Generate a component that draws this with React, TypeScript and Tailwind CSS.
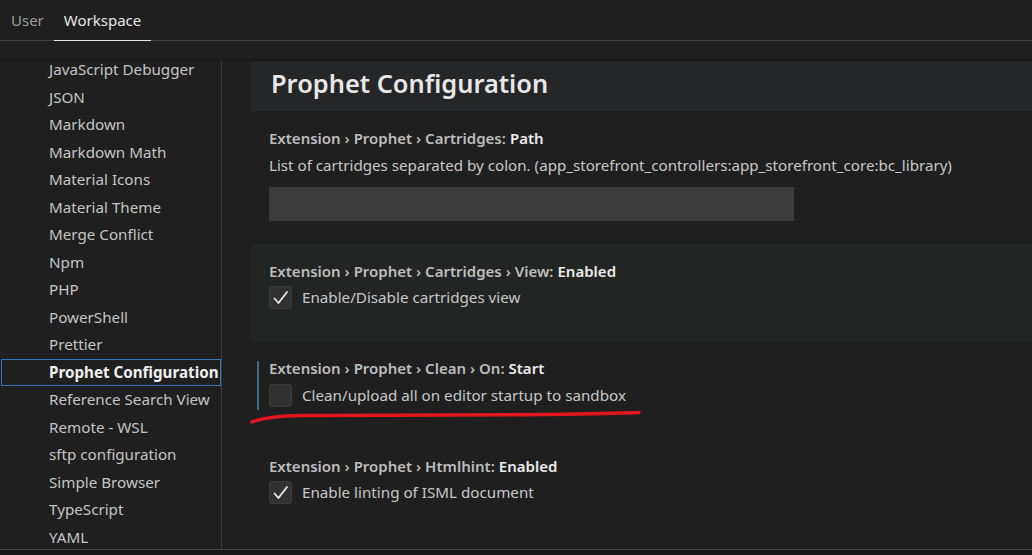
import React from 'react';

const groups = [
  'JavaScript Debugger',
  'JSON',
  'Markdown',
  'Markdown Math',
  'Material Icons',
  'Material Theme',
  'Merge Conflict',
  'Npm',
  'PHP',
  'PowerShell',
  'Prettier',
  'Prophet Configuration',
  'Reference Search View',
  'Remote - WSL',
  'sftp configuration',
  'Simple Browser',
  'TypeScript',
  'YAML',
];

const Checkbox = ({ checked }: { checked: boolean }) => (
  <div className="w-[23px] h-[23px] rounded-[3px] bg-[#313131] border border-[#3c3c3c] flex items-center justify-center shrink-0">
    {checked && (
      <svg width="21" height="21" viewBox="0 0 21 21" fill="none">
        <path d="M4.5 11.5 L8.5 16 L17 5" stroke="#e8e8e8" strokeWidth="1.8" strokeLinecap="round" strokeLinejoin="round" />
      </svg>
    )}
  </div>
);

const SettingTitle = ({ path, name }: { path: string; name: string }) => (
  <div className="h-[18px] flex items-center text-[15px] font-semibold text-[#bdbdbd] whitespace-nowrap">
    {path}
    <span className="text-[#ececec] ml-[4px]">{name}</span>
  </div>
);

const BoolSetting = ({
  path,
  name,
  label,
  checked,
  hover,
  focused,
}: {
  path: string;
  name: string;
  label: string;
  checked: boolean;
  hover?: boolean;
  focused?: boolean;
}) => (
  <div className={`relative h-[97.5px] pl-[18px] pt-[18px] ${hover ? 'bg-[#232525]' : ''}`}>
    {focused && <div className="absolute left-[6px] top-[19px] w-[2px] h-[49px] bg-[#3b6a8a]" />}
    <SettingTitle path={path} name={name} />
    <div className="flex items-center mt-[6px]">
      <Checkbox checked={checked} />
      <span className="ml-[10px] text-[15.2px] text-[#c8c8c8]">{label}</span>
    </div>
  </div>
);

export default function App() {
  return (
    <div className="w-[1032px] h-[555px] bg-[#1f1f1f] flex flex-col overflow-hidden font-['Noto_Sans',sans-serif] relative">
      {/* tabs */}
      <div className="h-[41px] shrink-0 flex border-b border-[#454545] pl-[1px]">
        <div className="px-[10px] flex items-center text-[15px] text-[#9d9d9d]">User</div>
        <div className="px-[10px] flex items-center text-[15px] text-[#e7e7e7] border-b border-[#e7e7e7] mb-[-1px]">Workspace</div>
      </div>
      <div className="h-[18px] shrink-0" />

      <div className="flex-1 flex min-h-0 border-b border-[#454545] relative">
        <div className="absolute left-0 right-0 top-0 h-[3px] bg-gradient-to-b from-[#161616] to-transparent z-10" />
        {/* sidebar */}
        <div className="w-[222px] shrink-0 border-r border-[#3f3f3f] overflow-hidden">
          <div className="mt-[-3px]">
            {groups.map((g) =>
              g === 'Prophet Configuration' ? (
                <div
                  key={g}
                  className="h-[27.5px] ml-[1px] pl-[47px] flex items-center border border-[#3a72bd] text-[15.2px] font-bold text-[#f0f0f0] whitespace-nowrap overflow-hidden"
                >
                  {g}
                </div>
              ) : (
                <div key={g} className="h-[27.5px] pl-[49px] flex items-center text-[15.2px] text-[#c5c5c5] whitespace-nowrap">
                  {g}
                </div>
              )
            )}
          </div>
        </div>

        {/* main */}
        <div className="flex-1 pl-[29px] overflow-hidden">
          <div className="h-[49px] mt-[3px] bg-[#252628] pl-[20px] pb-[6px] flex items-center text-[25.4px] font-semibold text-[#e7e7e7]">
            Prophet Configuration
          </div>

          <div className="h-[133px] pl-[18px] pt-[18px]">
            <SettingTitle path="Extension › Prophet › Cartridges:" name="Path" />
            <div className="h-[22px] mt-[7px] flex items-center text-[15.15px] text-[#c8c8c8] whitespace-nowrap">
              List of cartridges separated by colon. (app_storefront_controllers:app_storefront_core:bc_library)
            </div>
            <div className="w-[525px] h-[34px] mt-[11px] bg-[#3c3c3c]" />
          </div>

          <BoolSetting
            path="Extension › Prophet › Cartridges › View:"
            name="Enabled"
            label="Enable/Disable cartridges view"
            checked
            hover
          />
          <BoolSetting
            path="Extension › Prophet › Clean › On:"
            name="Start"
            label="Clean/upload all on editor startup to sandbox"
            checked={false}
            focused
          />
          <BoolSetting
            path="Extension › Prophet › Htmlhint:"
            name="Enabled"
            label="Enable linting of ISML document"
            checked
          />
        </div>
      </div>
      <div className="h-[5px] shrink-0 bg-[#181818]" />

      {/* hand-drawn red underline */}
      <svg className="absolute left-[248px] top-[405px]" width="400" height="22" viewBox="0 0 400 22" fill="none">
        <path
          d="M4 17 C 14 13, 26 11, 55 10.5 C 150 10, 250 10, 300 9.5 C 340 9, 370 8.5, 391 7.5"
          stroke="#e3161d"
          strokeWidth="3.5"
          strokeLinecap="round"
        />
      </svg>
    </div>
  );
}
